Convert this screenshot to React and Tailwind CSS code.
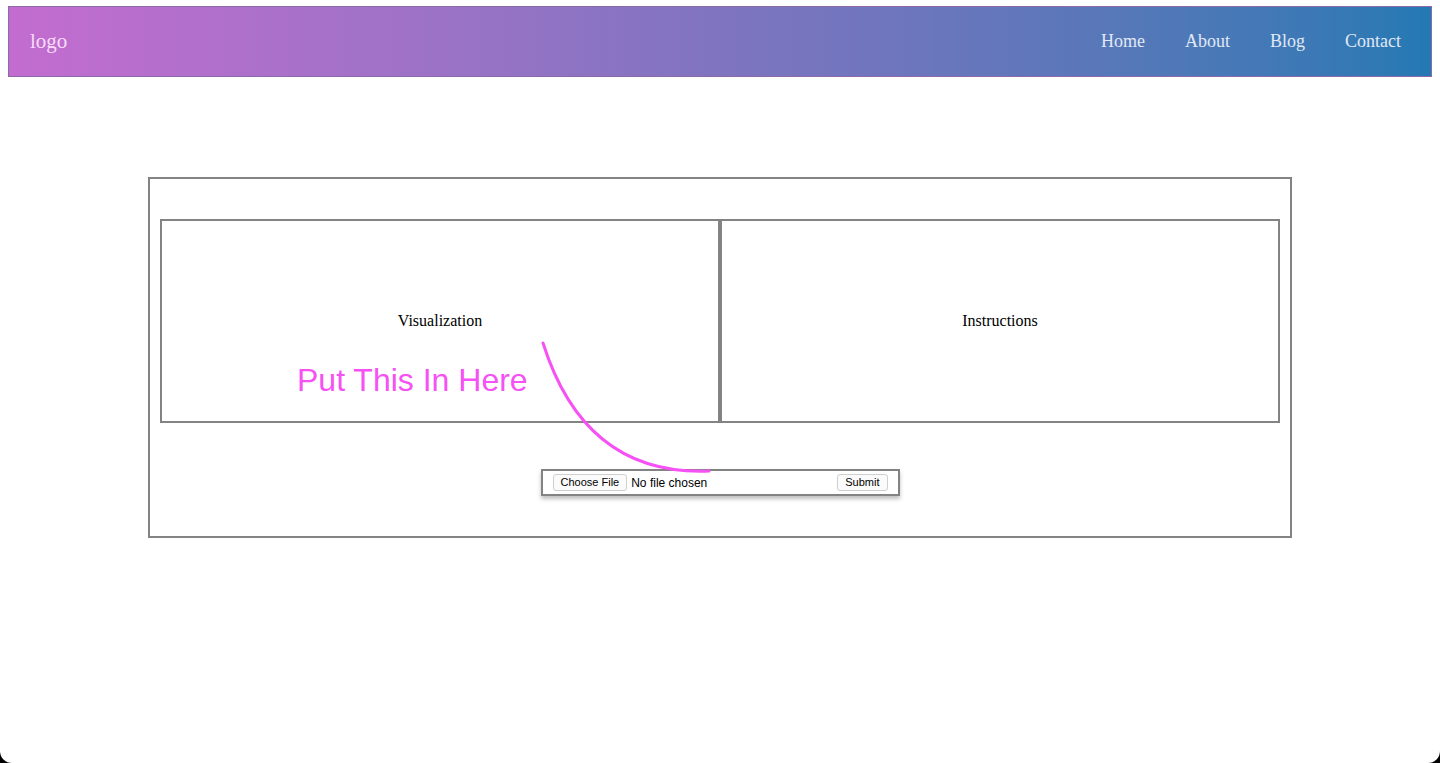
export default function App() {
  const nav = ['Home', 'About', 'Blog', 'Contact']
  return (
    <div className="bg-black h-[763px]">
      <div className="relative h-[763px] bg-white rounded-b-[12px] pt-[6px] px-[8px] overflow-hidden">
        {/* Header */}
        <header
          className="h-[71px] flex items-center justify-between border border-[#8a6aa8] bg-gradient-to-r from-[#c36cd0] via-[#7f74c0] to-[#2379b3] pl-[21px] pr-[30px]"
          style={{ fontFamily: '"Liberation Serif", "Times New Roman", serif' }}
        >
          <span className="text-[21px] text-[#f6dcf8]">logo</span>
          <nav className="flex gap-[40px] text-[18px] text-[#e1e8f6]">
            {nav.map((n) => (
              <a key={n} href="#">{n}</a>
            ))}
          </nav>
        </header>

        {/* Main box */}
        <div
          className="mx-auto mt-[100px] w-[1144px] h-[361px] border-2 border-[#838383] pt-[40px] px-[10px]"
          style={{ fontFamily: '"Liberation Serif", "Times New Roman", serif' }}
        >
          <div className="flex h-[204px]">
            <div className="flex-1 border-2 border-[#838383] flex items-center justify-center text-[16px] text-black">
              Visualization
            </div>
            <div className="flex-1 border-2 border-[#838383] flex items-center justify-center text-[16px] text-black">
              Instructions
            </div>
          </div>

          <div className="flex justify-center mt-[46px]">
            <form
              className="w-[359px] h-[27px] border-2 border-[#838383] bg-white shadow-[0_3px_4px_rgba(0,0,0,0.25)] flex items-center pl-[10px] pr-[10px] text-[12px] text-black"
              style={{ fontFamily: '"Liberation Sans", Arial, sans-serif' }}
              onSubmit={(e) => e.preventDefault()}
            >
              <button type="button" className="h-[17px] px-[7px] border border-[#cfcfcf] rounded-[3px] bg-[#fbfbfb] leading-none text-[11px]">
                Choose File
              </button>
              <span className="ml-[4px]">No file chosen</span>
              <button type="submit" className="ml-auto h-[17px] px-[7px] border border-[#cfcfcf] rounded-[3px] bg-[#fbfbfb] leading-none text-[11px]">
                Submit
              </button>
            </form>
          </div>
        </div>

        {/* Annotation */}
        <span
          className="absolute left-[297px] top-[364px] text-[32px] leading-none text-[#f651f4]"
          style={{ fontFamily: '"Liberation Sans", Arial, sans-serif' }}
        >
          Put This In Here
        </span>
        <svg className="absolute left-0 top-0 pointer-events-none" width="1440" height="763">
          <path d="M543 343 Q585 476 709 471" fill="none" stroke="#f651f4" strokeWidth="3" strokeLinecap="round" />
        </svg>
      </div>
    </div>
  )
}
